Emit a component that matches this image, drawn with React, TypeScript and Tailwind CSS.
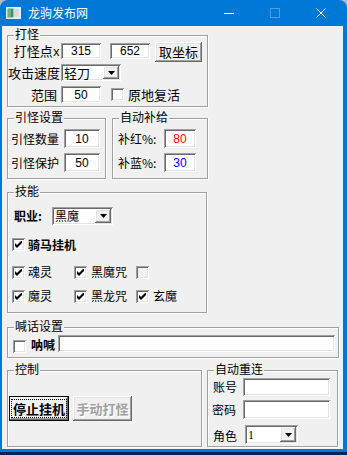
import React from "react";

const cjk = "font-['Noto_Sans_CJK_SC',sans-serif]";
const num = "font-['Liberation_Sans',sans-serif]";
const sunken =
  "shadow-[inset_1px_1px_0_#a0a0a0,inset_-1px_-1px_0_#ffffff,inset_2px_2px_0_#696969,inset_-2px_-2px_0_#e3e3e3]";
const raised =
  "bg-[#f0f0f0] shadow-[inset_-1px_-1px_0_#696969,inset_1px_1px_0_#ffffff,inset_-2px_-2px_0_#a0a0a0,inset_2px_2px_0_#e3e3e3]";

function Field({ cls, value, color }: { cls: string; value?: string; color?: string }) {
  return (
    <div
      className={`${sunken} bg-white ${cls} shrink-0 flex items-center justify-center ${num} text-[12px] leading-none ${color ?? "text-black"}`}
    >
      {value}
    </div>
  );
}

function Arrow() {
  return (
    <svg width="7" height="4" viewBox="0 0 7 4">
      <path d="M0 0H7L3.5 4Z" fill="#000" />
    </svg>
  );
}

function Combo({ cls, btn, text, textCls }: { cls: string; btn: string; text: string; textCls: string }) {
  return (
    <div className={`${sunken} bg-white ${cls} shrink-0 flex items-center pl-[3px] pr-[2px]`}>
      <span className={`flex-1 whitespace-nowrap ${textCls}`}>{text}</span>
      <div className={`${raised} ${btn} w-[16px] flex items-center justify-center`}>
        <Arrow />
      </div>
    </div>
  );
}

function Check({ checked, disabled }: { checked?: boolean; disabled?: boolean }) {
  return (
    <div
      className={`w-[13px] h-[13px] shrink-0 ${disabled ? "bg-[#f0f0f0]" : "bg-white"} ${sunken} flex items-center justify-center`}
    >
      {checked && (
        <svg width="7" height="7" viewBox="0 0 7 7">
          <path d="M0 2L2 4L7 -1V2L2 7L0 5Z" fill="#000" />
        </svg>
      )}
    </div>
  );
}

function Group({ title, cls, children }: { title: string; cls: string; children?: React.ReactNode }) {
  return (
    <div className={`relative shrink-0 border border-[#a0a0a0] shadow-[inset_1px_1px_0_#ffffff,1px_1px_0_#ffffff] ${cls}`}>
      <span
        className={`absolute left-[6px] top-[-8px] whitespace-nowrap bg-[#f0f0f0] px-[1px] ${cjk} text-[12px] leading-[12px] text-black`}
      >
        {title}
      </span>
      {children}
    </div>
  );
}

function TitleBar() {
  return (
    <div className="flex h-[26px] shrink-0 items-center">
      <svg className="ml-[6px]" width="15" height="12" viewBox="0 0 15 12">
        <rect x="0.5" y="0.5" width="14" height="11" fill="#ffffff" stroke="#e8eef4" />
        <rect x="1.5" y="1.5" width="6" height="9" fill="#3f8f6f" />
        <rect x="2" y="2" width="3" height="8" fill="#6fb08a" />
        <rect x="8" y="1.5" width="5.5" height="9" fill="#d4dcdc" />
      </svg>
      <span className={`ml-[7px] ${cjk} text-[12px] leading-[14px] text-white`}>龙驹发布网</span>
      <div className="flex-1" />
      <div className="flex h-[26px] w-[46px] items-center justify-center">
        <div className="h-[1px] w-[10px] bg-white" />
      </div>
      <div className="flex h-[26px] w-[46px] items-center justify-center">
        <div className="h-[10px] w-[10px] border border-[#4d9ee3]" />
      </div>
      <div className="mr-[3px] flex h-[26px] w-[46px] items-center justify-center">
        <svg width="10" height="10" viewBox="0 0 10 10">
          <path d="M0.5 0.5L9.5 9.5M9.5 0.5L0.5 9.5" stroke="#ffffff" strokeWidth="1" />
        </svg>
      </div>
    </div>
  );
}

const t13 = `${cjk} text-[13px] leading-[16px] text-black whitespace-nowrap`;
const t12 = `${cjk} text-[12px] leading-[14px] text-black whitespace-nowrap`;

export default function App() {
  return (
    <div className="h-[455px] w-[347px] overflow-hidden bg-linear-to-b from-[#a9bdd2] to-[#0c2150]">
      <div className="flex h-[452px] w-[347px] flex-col rounded-t-[8px] bg-[#0078d7]">
        <TitleBar />
        <div className="ml-[2px] flex h-[423px] w-[341px] flex-col bg-[#f0f0f0] pl-[5px] pt-[9px]">
          {/* 打怪 */}
          <Group title="打怪" cls="w-[201px] h-[72px]">
            <div className="flex flex-col">
              <div className="mt-[6px] flex h-[20px] items-start">
                <span className={`mt-[2px] w-[53px] pr-[1px] text-right ${cjk} text-[13px] leading-[14px] text-black whitespace-nowrap`}>
                  打怪点<span className="font-['Liberation_Mono',monospace] text-[12px]">x</span>
                </span>
                <Field cls="mt-[1px] w-[40px] h-[16px]" value="315" />
                <Field cls="mt-[1px] ml-[9px] w-[40px] h-[16px]" value="652" />
                <div className={`${raised} ml-[5px] flex h-[20px] w-[47px] items-center justify-center ${t13}`}>
                  取坐标
                </div>
              </div>
              <div className="mt-[2px] flex h-[17px] items-center">
                <span className={`w-[53px] pr-[1px] text-right ${t13}`}>攻击速度</span>
                <Combo cls="w-[60px] h-[17px]" btn="h-[13px]" text="轻刀" textCls={t13} />
              </div>
              <div className="mt-[5px] flex h-[17px] items-center">
                <span className={`w-[53px] pr-[4px] text-right ${t13}`}>范围</span>
                <Field cls="w-[40px] h-[17px]" value="50" />
                <div className="ml-[10px]">
                  <Check />
                </div>
                <span className={`ml-[4px] ${t13}`}>原地复活</span>
              </div>
            </div>
          </Group>

          {/* 引怪设置 / 自动补给 */}
          <div className="mt-[11px] flex">
            <Group title="引怪设置" cls="w-[99px] h-[61px]">
              <div className="flex flex-col pl-[3px]">
                <div className="mt-[10px] flex h-[19px] items-center">
                  <span className={`w-[53px] ${t12}`}>引怪数量</span>
                  <Field cls="w-[36px] h-[19px]" value="10" />
                </div>
                <div className="mt-[5px] flex h-[19px] items-center">
                  <span className={`w-[53px] ${t12}`}>引怪保护</span>
                  <Field cls="w-[36px] h-[19px]" value="50" />
                </div>
              </div>
            </Group>
            <Group title="自动补给" cls="ml-[6px] w-[96px] h-[61px]">
              <div className="flex flex-col pl-[5px]">
                <div className="mt-[10px] flex h-[19px] items-center">
                  <span className={`w-[46px] ${t12}`}>补红%:</span>
                  <Field cls="w-[32px] h-[19px]" value="80" color="text-[#ff0000]" />
                </div>
                <div className="mt-[5px] flex h-[19px] items-center">
                  <span className={`w-[46px] ${t12}`}>补蓝%:</span>
                  <Field cls="w-[32px] h-[19px]" value="30" color="text-[#0000ff]" />
                </div>
              </div>
            </Group>
          </div>

          {/* 技能 */}
          <Group title="技能" cls="mt-[13px] w-[200px] h-[121px]">
            <div className="flex flex-col pl-[4px]">
              <div className="mt-[14px] flex h-[18px] items-center pl-[2px]">
                <span className={`w-[38px] font-bold ${t12}`}>职业:</span>
                <Combo cls="w-[61px] h-[18px]" btn="h-[14px]" text="黑魔" textCls={t12} />
              </div>
              <div className="mt-[13px] flex h-[13px] items-center">
                <Check checked />
                <span className={`ml-[3px] font-bold ${t12}`}>骑马挂机</span>
              </div>
              <div className="mt-[14px] grid h-[13px] grid-cols-[62px_62px_62px] items-center">
                <div className="flex items-center">
                  <Check checked />
                  <span className={`ml-[3px] ${t12}`}>魂灵</span>
                </div>
                <div className="flex items-center">
                  <Check checked />
                  <span className={`ml-[4px] ${t12}`}>黑魔咒</span>
                </div>
                <div className="flex items-center">
                  <Check disabled />
                </div>
              </div>
              <div className="mt-[11px] grid h-[13px] grid-cols-[62px_62px_62px] items-center">
                <div className="flex items-center">
                  <Check checked />
                  <span className={`ml-[3px] ${t12}`}>魔灵</span>
                </div>
                <div className="flex items-center">
                  <Check checked />
                  <span className={`ml-[4px] ${t12}`}>黑龙咒</span>
                </div>
                <div className="flex items-center">
                  <Check checked />
                  <span className={`ml-[4px] ${t12}`}>玄魔</span>
                </div>
              </div>
            </div>
          </Group>

          {/* 喊话设置 */}
          <Group title="喊话设置" cls="mt-[14px] w-[332px] h-[31px]">
            <div className="flex items-start pl-[5px]">
              <div className="mt-[12px]">
                <Check />
              </div>
              <span className={`ml-[5px] mt-[10px] font-bold ${t12}`}>呐喊</span>
              <Field cls="mt-[7px] ml-[3px] w-[277px] h-[17px]" />
            </div>
          </Group>

          {/* 控制 / 自动重连 */}
          <div className="mt-[12px] flex">
            <Group title="控制" cls="w-[195px] h-[77px]">
              <div className="mt-[25px] flex pl-[1px]">
                <div className="flex h-[25px] w-[60px] items-center justify-center border border-black bg-[#f0f0f0] shadow-[inset_-1px_-1px_0_#696969,inset_1px_1px_0_#ffffff,inset_-2px_-2px_0_#a0a0a0]">
                  <div className="flex h-[19px] w-[56px] items-center justify-center border border-dotted border-black">
                    <span className={`font-bold ${t13}`}>停止挂机</span>
                  </div>
                </div>
                <div className={`${raised} ml-[4px] flex h-[25px] w-[59px] items-center justify-center`}>
                  <span
                    className={`${cjk} whitespace-nowrap text-[13px] font-bold leading-[16px] text-[#a0a0a0] [text-shadow:1px_1px_0_#ffffff]`}
                  >
                    手动打怪
                  </span>
                </div>
              </div>
            </Group>
            <Group title="自动重连" cls="ml-[5px] w-[131px] h-[77px]">
              <div className="flex flex-col pl-[4px]">
                <div className="mt-[7px] flex h-[18px] items-center">
                  <span className={`w-[31px] pl-[1px] ${t12}`}>账号</span>
                  <Field cls="w-[87px] h-[18px]" />
                </div>
                <div className="mt-[4px] flex h-[19px] items-center">
                  <span className={`w-[31px] ${t12}`}>密码</span>
                  <Field cls="w-[87px] h-[19px]" />
                </div>
                <div className="mt-[6px] flex h-[19px] items-center">
                  <span className={`mt-[3px] w-[33px] pl-[1px] ${t12}`}>角色</span>
                  <Combo
                    cls="w-[53px] h-[19px]"
                    btn="h-[15px]"
                    text="1"
                    textCls={`font-['Liberation_Serif',serif] text-[12px] leading-[14px] text-black`}
                  />
                </div>
              </div>
            </Group>
          </div>
        </div>
      </div>
    </div>
  );
}
